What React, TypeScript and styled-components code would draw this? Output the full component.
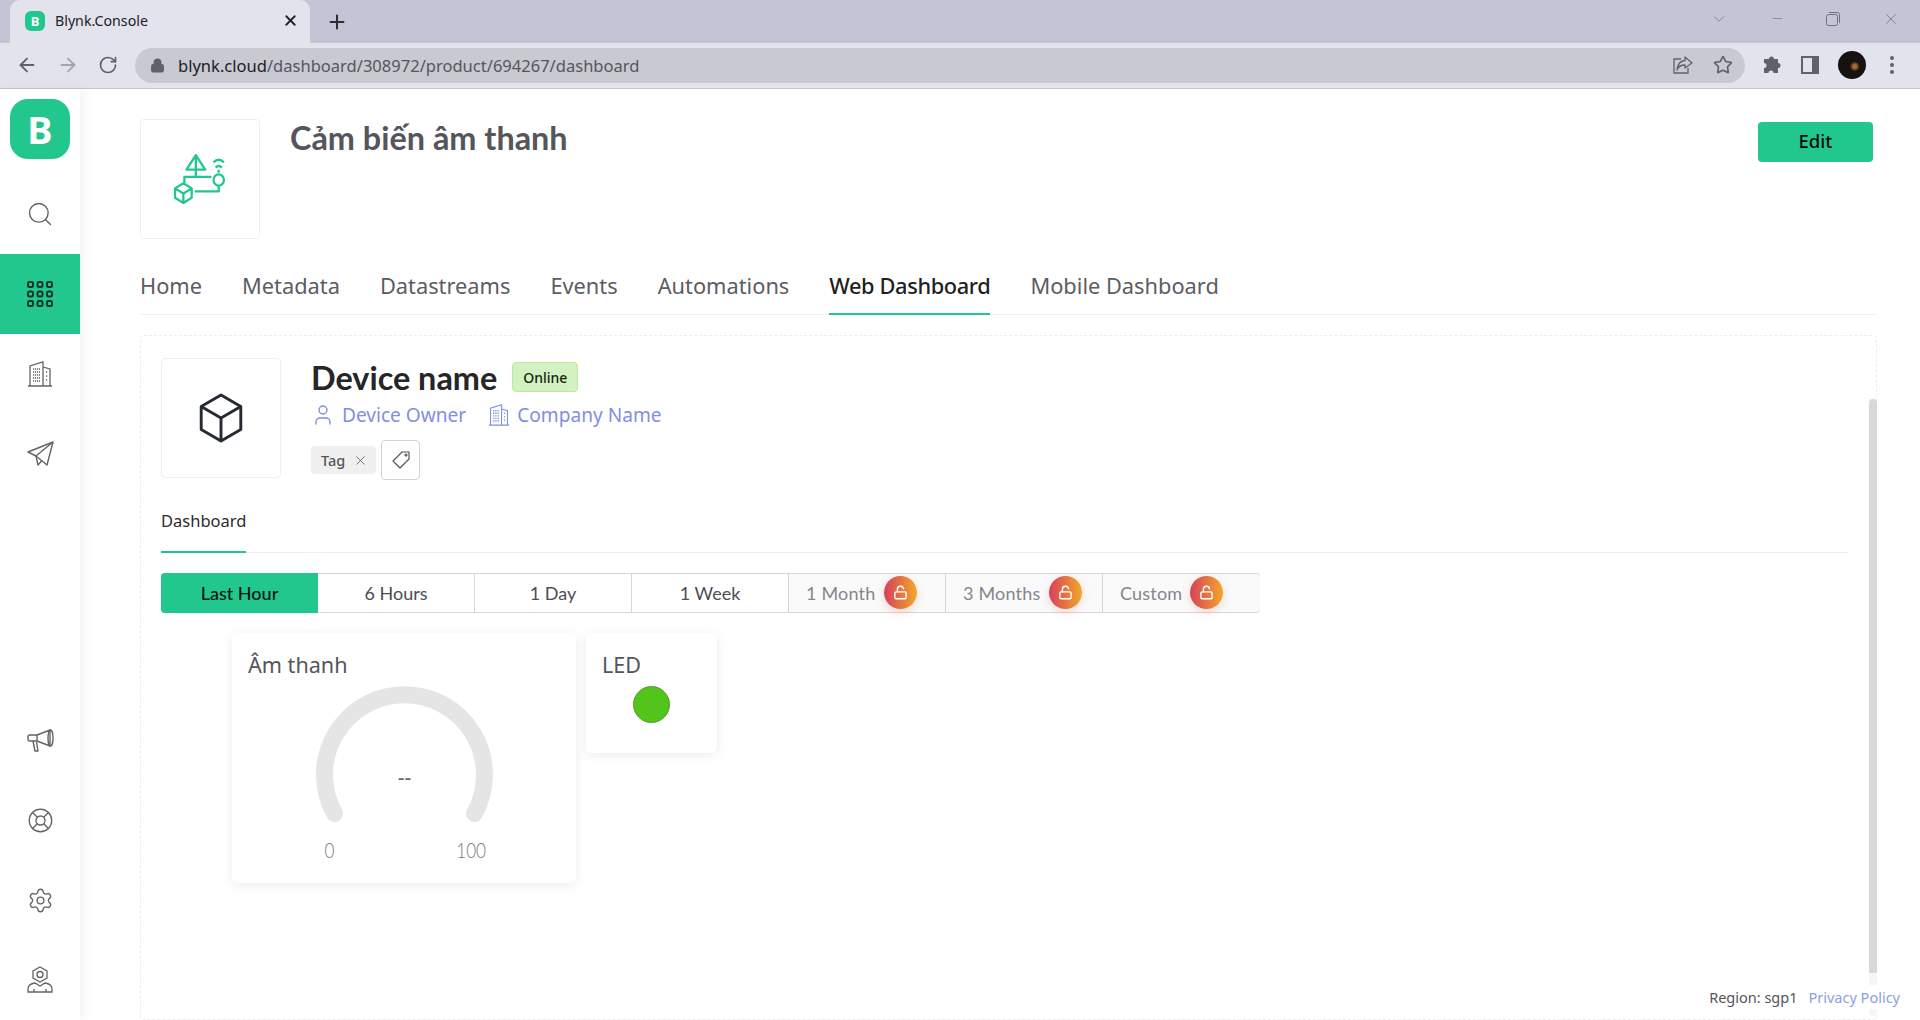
import React from 'react'
import styled, {createGlobalStyle} from 'styled-components'
import {ArrowLeft, ArrowRight, ChevronDown, LifeBuoy, Lock, LockOpen, Minus, Plus, RotateCw, Search, Settings, Star, User, X} from 'lucide-react'

const GREEN = '#22c78d'
const BODY_FONT = '"Noto Sans", "Liberation Sans", sans-serif'
const TITLE_FONT = 'Lato, "Noto Sans", sans-serif'

const GlobalStyle = createGlobalStyle`
  html, body {
    margin: 0;
    padding: 0;
    height: 1020px;
    overflow: hidden;
    background: #fff;
    font-family: ${BODY_FONT};
  }
  * { box-sizing: border-box; }
`

const Page = styled.div`
  position: relative;
  display: flex;
  flex-direction: column;
  width: 1920px;
  height: 1020px;
  overflow: hidden;
`

/* browser chrome */
const TabStrip = styled.div`
  display: flex;
  align-items: flex-end;
  height: 43px;
  padding-left: 10px;
  background: #c3c4d6;
  color: #70717c;
`
const BrowserTab = styled.div`
  display: flex;
  align-items: center;
  width: 300px;
  height: 43px;
  padding: 0 11px 2px 15px;
  border-radius: 10px 10px 0 0;
  background: #e2e3ec;
  color: #202124;
  font-family: ${BODY_FONT};
  font-size: 14.2px;
`
const Favicon = styled.span`
  display: flex;
  align-items: center;
  justify-content: center;
  width: 20px;
  height: 20px;
  margin-right: 10px;
  border-radius: 6px;
  background: ${GREEN};
  color: #fff;
  font-size: 13px;
  font-weight: 700;
`
const TabTitle = styled.span`
  flex: 1;
`
const NewTab = styled.span`
  display: flex;
  margin: 0 0 10px 16px;
  color: #2c2d33;
`
const WindowButtons = styled.div`
  display: flex;
  align-items: center;
  justify-content: space-between;
  width: 190px;
  height: 43px;
  margin-left: auto;
  margin-right: 20px;
  padding-bottom: 6px;
`
const Toolbar = styled.div`
  display: flex;
  align-items: center;
  height: 46px;
  padding: 0 26px 1px 16px;
  border-bottom: 1px solid #c4c5d0;
  background: #e2e3ec;
  color: #5f6368;
`
const NavButtons = styled.div`
  display: flex;
  align-items: center;
  gap: 19px;
  margin-right: 17px;
`
const Omnibox = styled.div`
  display: flex;
  align-items: center;
  width: 1610px;
  height: 35px;
  padding: 0 12px 0 15px;
  border-radius: 18px;
  background: #c8c9d1;
  font-size: 18px;
`
const UrlText = styled.span`
  flex: 1;
  margin-left: 13px;
  color: #55565c;
  font-family: ${BODY_FONT};
  font-size: 16.55px;
  b {
    color: #202124;
    font-weight: 400;
  }
`
const ToolbarIcons = styled.div`
  display: flex;
  align-items: center;
  gap: 20px;
`
const ExtIcons = styled.div`
  display: flex;
  align-items: center;
  justify-content: space-between;
  flex: 1;
  margin-left: 18px;
`
const Avatar = styled.span`
  width: 28px;
  height: 28px;
  margin-right: 4px;
  border-radius: 50%;
  background: radial-gradient(circle at 60% 55%, #a86a2c 0 8%, #15120f 22%);
`

/* app shell */
const Body = styled.div`
  display: flex;
  flex: 1;
  min-height: 0;
`
const Sidebar = styled.nav`
  display: flex;
  flex-direction: column;
  flex: 0 0 80px;
  padding-top: 10px;
  background: #fff;
  box-shadow: 4px 0 12px rgba(0, 0, 0, 0.05);
`
const Logo = styled.div`
  display: flex;
  align-items: center;
  justify-content: center;
  width: 60px;
  height: 60px;
  margin: 0 auto 15px;
  border-radius: 18px;
  background: ${GREEN};
  color: #fff;
  font-family: ${BODY_FONT};
  font-size: 38px;
  font-weight: 700;
`
const NavItem = styled.div<{$active?: boolean}>`
  display: flex;
  align-items: center;
  justify-content: center;
  height: 80px;
  background: ${p => (p.$active ? GREEN : 'transparent')};
  color: ${p => (p.$active ? '#10352a' : '#646464')};
`
const NavSpacer = styled.div`
  flex: 1;
`
const Main = styled.main`
  display: flex;
  flex-direction: column;
  flex: 1;
  min-width: 0;
  padding: 30px 43px 0 60px;
`
const ProductHead = styled.div`
  display: flex;
  align-items: flex-start;
`
const IconBox = styled.div`
  display: flex;
  align-items: center;
  justify-content: center;
  flex: 0 0 120px;
  height: 120px;
  border: 1px solid #efefef;
  border-radius: 4px;
  background: #fff;
`
const ProductTitle = styled.h1`
  flex: 1;
  margin: 0 0 0 30px;
  color: #55555c;
  font-family: ${TITLE_FONT};
  font-size: 32.4px;
  font-weight: 700;
  line-height: 38px;
`
const EditButton = styled.button`
  width: 115px;
  height: 40px;
  margin: 3px 4px 0 0;
  padding: 0 0 4px;
  border: 0;
  border-radius: 4px;
  background: ${GREEN};
  color: #0b0b0b;
  font-family: ${BODY_FONT};
  font-size: 18.5px;
  font-weight: 500;
`
const Tabs = styled.div`
  display: flex;
  gap: 40px;
  height: 52px;
  margin-top: 24px;
  border-bottom: 1px solid #efefef;
`
const Tab = styled.div<{$active?: boolean}>`
  height: 52px;
  padding-top: 8px;
  border-bottom: 2px solid ${p => (p.$active ? GREEN : 'transparent')};
  color: ${p => (p.$active ? '#1f1f1f' : '#5c5c62')};
  font-family: ${BODY_FONT};
  font-size: 21.8px;
  font-weight: ${p => (p.$active ? 500 : 400)};
  letter-spacing: ${p => (p.$active ? '-0.38px' : '0')};
  line-height: 30px;
  white-space: nowrap;
`
const Card = styled.section`
  flex: 1;
  min-height: 0;
  margin-top: 20px;
  padding: 22px 28px 0 20px;
  border: 1px dashed #eeeeee;
  border-radius: 4px;
`
const DeviceHead = styled.div`
  display: flex;
  align-items: flex-start;
`
const DeviceInfo = styled.div`
  display: flex;
  flex-direction: column;
  margin-left: 30px;
`
const NameRow = styled.div`
  display: flex;
  align-items: center;
  gap: 15px;
  height: 38px;
`
const DeviceName = styled.span`
  color: #262626;
  font-family: ${TITLE_FONT};
  font-size: 32.4px;
  font-weight: 700;
`
const StatusBadge = styled.span`
  display: flex;
  align-items: center;
  height: 30px;
  padding: 0 10px;
  border: 1px solid #b9eb9e;
  border-radius: 4px;
  background: #d3f2c2;
  color: #18240f;
  font-family: ${BODY_FONT};
  font-size: 14px;
  font-weight: 500;
`
const OwnerRow = styled.div`
  display: flex;
  align-items: center;
  height: 30px;
  margin-top: 4px;
`
const OwnerLink = styled.span`
  display: flex;
  align-items: center;
  gap: 7px;
  margin-right: 22px;
  color: #7f8fe2;
  font-family: ${BODY_FONT};
  font-size: 19.1px;
`
const TagRow = styled.div`
  display: flex;
  align-items: center;
  gap: 5px;
  margin-top: 10px;
`
const TagChip = styled.span`
  display: flex;
  align-items: center;
  gap: 8px;
  height: 28px;
  padding: 0 8px 0 10px;
  border-radius: 4px;
  background: #f0f0f0;
  color: #55555c;
  font-family: ${BODY_FONT};
  font-size: 14.5px;
  font-weight: 500;
`
const TagButton = styled.span`
  display: flex;
  align-items: center;
  justify-content: center;
  width: 39px;
  height: 40px;
  border: 1px solid #d4d4d4;
  border-radius: 4px;
  color: #55555c;
`
const SubTabs = styled.div`
  display: flex;
  height: 54px;
  margin-top: 19px;
  border-bottom: 1px solid #ececec;
`
const SubTab = styled.div`
  height: 54px;
  padding-top: 9px;
  border-bottom: 2px solid ${GREEN};
  color: #2c2c2c;
  font-family: ${BODY_FONT};
  font-size: 16.5px;
  line-height: 26px;
`
const RangeBar = styled.div`
  display: grid;
  grid-template-columns: repeat(7, 157px);
  width: 1099px;
  height: 40px;
  margin-top: 20px;
  border: 1px solid #d6d6d6;
  border-left: 0;
  border-radius: 4px;
`
const RangeCell = styled.div<{$active?: boolean; $locked?: boolean}>`
  display: flex;
  align-items: center;
  justify-content: ${p => (p.$locked ? 'flex-start' : 'center')};
  gap: 8px;
  margin: ${p => (p.$active ? '-1px 0' : '0')};
  padding: 0 0 1px ${p => (p.$locked ? '17px' : '0')};
  border-right: ${p => (p.$active ? '0' : '1px solid #d6d6d6')};
  border-radius: ${p => (p.$active ? '4px 0 0 4px' : '0')};
  background: ${p => (p.$active ? GREEN : p.$locked ? '#fafafa' : '#fff')};
  color: ${p => (p.$active ? '#0d1512' : p.$locked ? '#85858e' : '#4d4d54')};
  font-family: ${TITLE_FONT};
  font-size: 18px;
  font-weight: ${p => (p.$active ? 500 : 400)};
  letter-spacing: ${p => (p.$locked ? '0.2px' : '0')};
  white-space: nowrap;
  &:last-child {
    border-right: 0;
    border-radius: 0 4px 4px 0;
  }
`
const LockBadge = styled.span`
  display: flex;
  align-items: center;
  justify-content: center;
  flex: 0 0 33px;
  height: 33px;
  border-radius: 50%;
  background: linear-gradient(90deg, #d5405c, #f2a829);
  box-shadow: 0 3px 8px rgba(200, 110, 70, 0.25);
  color: #fff;
`
const Widgets = styled.div`
  display: flex;
  align-items: flex-start;
  gap: 10px;
  margin: 20px 0 0 71px;
`
const Widget = styled.div<{$w: number; $h: number}>`
  width: ${p => p.$w}px;
  height: ${p => p.$h}px;
  padding: 17px 16px;
  border-radius: 5px;
  background: #fff;
  box-shadow: 0 2px 12px rgba(0, 0, 0, 0.08);
`
const WidgetTitle = styled.div`
  color: #55555c;
  font-family: ${BODY_FONT};
  font-size: 21.6px;
  line-height: 30px;
`
const GaugeWrap = styled.div`
  position: relative;
  width: 177px;
  margin: 3px 0 0 68px;
`
const GaugeValue = styled.span`
  position: absolute;
  top: 80px;
  left: 0;
  width: 100%;
  color: #666;
  font-family: ${BODY_FONT};
  font-size: 21px;
  text-align: center;
`
const GaugeScale = styled.div`
  display: flex;
  justify-content: space-between;
  width: 167px;
  margin: 8px 0 0 7px;
  color: #7a7a7a;
  font-family: ${TITLE_FONT};
  font-size: 22px;
  font-weight: 300;
  line-height: 28px;
  span {
    display: inline-block;
    transform: scaleX(0.78);
  }
`
const LedDot = styled.div`
  width: 37px;
  height: 37px;
  margin: 6px 0 0 31px;
  border: 1px solid #5a9a35;
  border-radius: 50%;
  background: #52c41a;
`
const ScrollTrack = styled.div`
  position: absolute;
  top: 399px;
  right: 43px;
  width: 8px;
  height: 617px;
  border-radius: 4px;
  background: #f6f6f6;
`
const ScrollThumb = styled.div`
  height: 574px;
  border-radius: 4px 4px 0 0;
  background: #d8d8d8;
`
const Footer = styled.div`
  position: absolute;
  right: 20px;
  bottom: 11px;
  display: flex;
  gap: 11px;
  padding-left: 8px;
  background: #fff;
  color: #55555c;
  font-family: ${BODY_FONT};
  font-size: 14.5px;
  line-height: 24px;
  a {
    color: #8ba0e6;
  }
`

const Cube = (props: {size: number, color: string}) =>
    <svg width={props.size} height={props.size} viewBox="0 0 42 48" fill="none" stroke={props.color} strokeWidth="2.8" strokeLinejoin="round">
        <path d="M21 2 L40 13 V35 L21 46 L2 35 V13 Z" />
        <path d="M2 13 L21 24 L40 13 M21 24 V46" />
    </svg>

const ProductIcon = () =>
    <svg width="52" height="50" viewBox="0 0 50 48" fill="none" stroke={GREEN} strokeWidth="2.2" strokeLinejoin="round">
        <path d="M21 1 L30 15 H12 Z M21 1 V15" />
        <path d="M21 15 V22 H10 V28 M21 22 H36" />
        <ellipse cx="43" cy="25" rx="5" ry="5.5" />
        <path d="M38 8 Q43 3 48 8 M40 13 Q43 10 46 13 M43 15 V18" />
        <path d="M43 31 V36 H20" />
        <path d="M9 28 L17 33 V42 L9 47 L1 42 V33 Z M1 33 L9 38 L17 33 M9 38 V47" />
    </svg>

const GridIcon = () =>
    <svg width="26" height="26" viewBox="0 0 26 26" fill="none" stroke="currentColor" strokeWidth="2">
        {[0, 9.5, 19].flatMap(y => [0, 9.5, 19].map(x =>
            <rect key={`${x}-${y}`} x={x + 1} y={y + 1} width="5" height="5" rx="1.5" />
        ))}
    </svg>

const BuildingIcon = (props: {size: number}) =>
    <svg width={props.size} height={props.size} viewBox="0 0 26 26" fill="none" stroke="currentColor" strokeWidth="1.3">
        <path d="M1 25 H25 M3 25 V5 L16 1 V25 M16 6 L23 8 V25" />
        <path d="M6 8 H13 M6 11 H13 M6 14 H13 M6 17 H13 M6 20 H13 M19 11 H21 M19 15 H21 M19 19 H21" strokeWidth="1.7" strokeDasharray="1.2 0.8" />
    </svg>

const PlaneIcon = () =>
    <svg width="27" height="26" viewBox="0 0 27 26" fill="none" stroke="currentColor" strokeWidth="1.4" strokeLinejoin="round">
        <path d="M26 1 L1 11 L9 15 L20 24 Z" />
        <path d="M26 1 L9 15 L11 24 L15 19.5" />
    </svg>

const MegaphoneIcon = () =>
    <svg width="27" height="25" viewBox="0 0 27 25" fill="none" stroke="currentColor" strokeWidth="1.4" strokeLinejoin="round">
        <path d="M3 7 H10 L23 2 V18 L10 13 H3 Q1 13 1 11 V9 Q1 7 3 7 Z" />
        <ellipse cx="23.5" cy="10" rx="2.5" ry="8" />
        <path d="M10 7 V13 M6 13 L8 23 H11 L9.5 14" />
    </svg>

const AccountIcon = () =>
    <svg width="26" height="28" viewBox="0 0 26 28" fill="none" stroke="currentColor" strokeWidth="1.3">
        <path d="M13 1 L20 5 V12 L13 16 L6 12 V5 Z" />
        <circle cx="13" cy="8.5" r="3" />
        <path d="M1 26 V23 Q1 18 8 17 L13 20 L18 17 Q25 18 25 23 V26 Z M7 26 V23 M19 26 V23" />
    </svg>

const PriceTag = () =>
    <svg width="18" height="18" viewBox="0 0 18 18" fill="none" stroke="currentColor" strokeWidth="1.2" strokeLinejoin="round">
        <path d="M10 1 H17 V8 L8 17 L1 10 Z" />
        <circle cx="14" cy="4" r="1" />
    </svg>

const ShareIcon = () =>
    <svg width="20" height="20" viewBox="0 0 20 20" fill="none" stroke="currentColor" strokeWidth="1.3">
        <path d="M8 4 H1 V18 H15 V13" />
        <path d="M12 2 L19 8 L12 13 V10 Q6 10 4 15 Q5 6 12 5.5 Z" strokeLinejoin="round" />
    </svg>

const PuzzleIcon = () =>
    <svg width="18" height="18" viewBox="0 0 18 18" fill="currentColor">
        <path d="M6 3 a2.5 2.5 0 0 1 5 0 H15 V7 a2.5 2.5 0 0 1 0 5 V17 H10.5 a2.5 2.5 0 0 0 -5 0 H1 V12 a2.5 2.5 0 0 0 0 -5 V3 Z" />
    </svg>

const PanelIcon = () =>
    <svg width="18" height="18" viewBox="0 0 18 18">
        <rect width="18" height="18" fill="currentColor" />
        <rect x="2" y="2" width="9" height="14" fill="#e2e3ec" />
    </svg>

const DotsIcon = () =>
    <svg width="4" height="18" viewBox="0 0 4 18" fill="currentColor">
        <circle cx="2" cy="2" r="2" />
        <circle cx="2" cy="9" r="2" />
        <circle cx="2" cy="16" r="2" />
    </svg>

const RestoreIcon = () =>
    <svg width="14" height="14" viewBox="0 0 14 14" fill="none" stroke="currentColor" strokeWidth="1">
        <rect x="0.5" y="2.5" width="11" height="11" rx="2" />
        <path d="M3 0.5 H11.5 Q13.5 0.5 13.5 2.5 V11" />
    </svg>

const Gauge = () =>
    <svg width="177" height="140" viewBox="0 0 177 140" fill="none">
        <path d="M 18.5 130.5 A 80 80 0 1 1 158.5 130.5" stroke="#e5e5e5" strokeWidth="17" strokeLinecap="round" />
    </svg>

const ranges = [
    {label: 'Last Hour', active: true},
    {label: '6 Hours'},
    {label: '1 Day'},
    {label: '1 Week'},
    {label: '1 Month', locked: true},
    {label: '3 Months', locked: true},
    {label: 'Custom', locked: true},
]

const tabs = ['Home', 'Metadata', 'Datastreams', 'Events', 'Automations', 'Web Dashboard', 'Mobile Dashboard']

export default function App() {
    return <Page>
        <GlobalStyle />
        <TabStrip>
            <BrowserTab>
                <Favicon>B</Favicon>
                <TabTitle>Blynk.Console</TabTitle>
                <X size={17} strokeWidth={2.6} color="#202124" />
            </BrowserTab>
            <NewTab><Plus size={22} strokeWidth={2.2} /></NewTab>
            <WindowButtons>
                <ChevronDown size={18} strokeWidth={1} />
                <Minus size={15} strokeWidth={1} />
                <RestoreIcon />
                <X size={18} strokeWidth={1} />
            </WindowButtons>
        </TabStrip>
        <Toolbar>
            <NavButtons>
                <ArrowLeft size={22} strokeWidth={2} />
                <ArrowRight size={22} strokeWidth={2} color="#a3a4ad" />
                <RotateCw size={20} strokeWidth={2} />
            </NavButtons>
            <Omnibox>
                <Lock size={15} strokeWidth={2.6} fill="currentColor" />
                <UrlText><b>blynk.cloud</b>/dashboard/308972/product/694267/dashboard</UrlText>
                <ToolbarIcons>
                    <ShareIcon />
                    <Star size={20} strokeWidth={2} />
                </ToolbarIcons>
            </Omnibox>
            <ExtIcons>
                <PuzzleIcon />
                <PanelIcon />
                <Avatar />
                <DotsIcon />
            </ExtIcons>
        </Toolbar>
        <Body>
            <Sidebar>
                <Logo>B</Logo>
                <NavItem><Search size={28} strokeWidth={1.2} /></NavItem>
                <NavItem $active><GridIcon /></NavItem>
                <NavItem><BuildingIcon size={26} /></NavItem>
                <NavItem><PlaneIcon /></NavItem>
                <NavSpacer />
                <NavItem><MegaphoneIcon /></NavItem>
                <NavItem><LifeBuoy size={27} strokeWidth={1.2} /></NavItem>
                <NavItem><Settings size={27} strokeWidth={1.2} /></NavItem>
                <NavItem><AccountIcon /></NavItem>
            </Sidebar>
            <Main>
                <ProductHead>
                    <IconBox><ProductIcon /></IconBox>
                    <ProductTitle>Cảm biến âm thanh</ProductTitle>
                    <EditButton>Edit</EditButton>
                </ProductHead>
                <Tabs>
                    {tabs.map(t => <Tab key={t} $active={t === 'Web Dashboard'}>{t}</Tab>)}
                </Tabs>
                <Card>
                    <DeviceHead>
                        <IconBox><Cube size={50} color="#262b33" /></IconBox>
                        <DeviceInfo>
                            <NameRow>
                                <DeviceName>Device name</DeviceName>
                                <StatusBadge>Online</StatusBadge>
                            </NameRow>
                            <OwnerRow>
                                <OwnerLink><User size={24} strokeWidth={1.4} />Device Owner</OwnerLink>
                                <OwnerLink><BuildingIcon size={22} />Company Name</OwnerLink>
                            </OwnerRow>
                            <TagRow>
                                <TagChip>Tag<X size={15} strokeWidth={1.3} /></TagChip>
                                <TagButton><PriceTag /></TagButton>
                            </TagRow>
                        </DeviceInfo>
                    </DeviceHead>
                    <SubTabs><SubTab>Dashboard</SubTab></SubTabs>
                    <RangeBar>
                        {ranges.map(r =>
                            <RangeCell key={r.label} $active={r.active} $locked={r.locked}>
                                {r.label}
                                {r.locked && <LockBadge><LockOpen size={15} strokeWidth={2.2} /></LockBadge>}
                            </RangeCell>
                        )}
                    </RangeBar>
                    <Widgets>
                        <Widget $w={344} $h={250}>
                            <WidgetTitle>Âm thanh</WidgetTitle>
                            <GaugeWrap>
                                <Gauge />
                                <GaugeValue>--</GaugeValue>
                                <GaugeScale><span>0</span><span>100</span></GaugeScale>
                            </GaugeWrap>
                        </Widget>
                        <Widget $w={131} $h={120}>
                            <WidgetTitle>LED</WidgetTitle>
                            <LedDot />
                        </Widget>
                    </Widgets>
                </Card>
            </Main>
        </Body>
        <ScrollTrack><ScrollThumb /></ScrollTrack>
        <Footer>
            <span>Region: sgp1</span>
            <a>Privacy Policy</a>
        </Footer>
    </Page>
}
